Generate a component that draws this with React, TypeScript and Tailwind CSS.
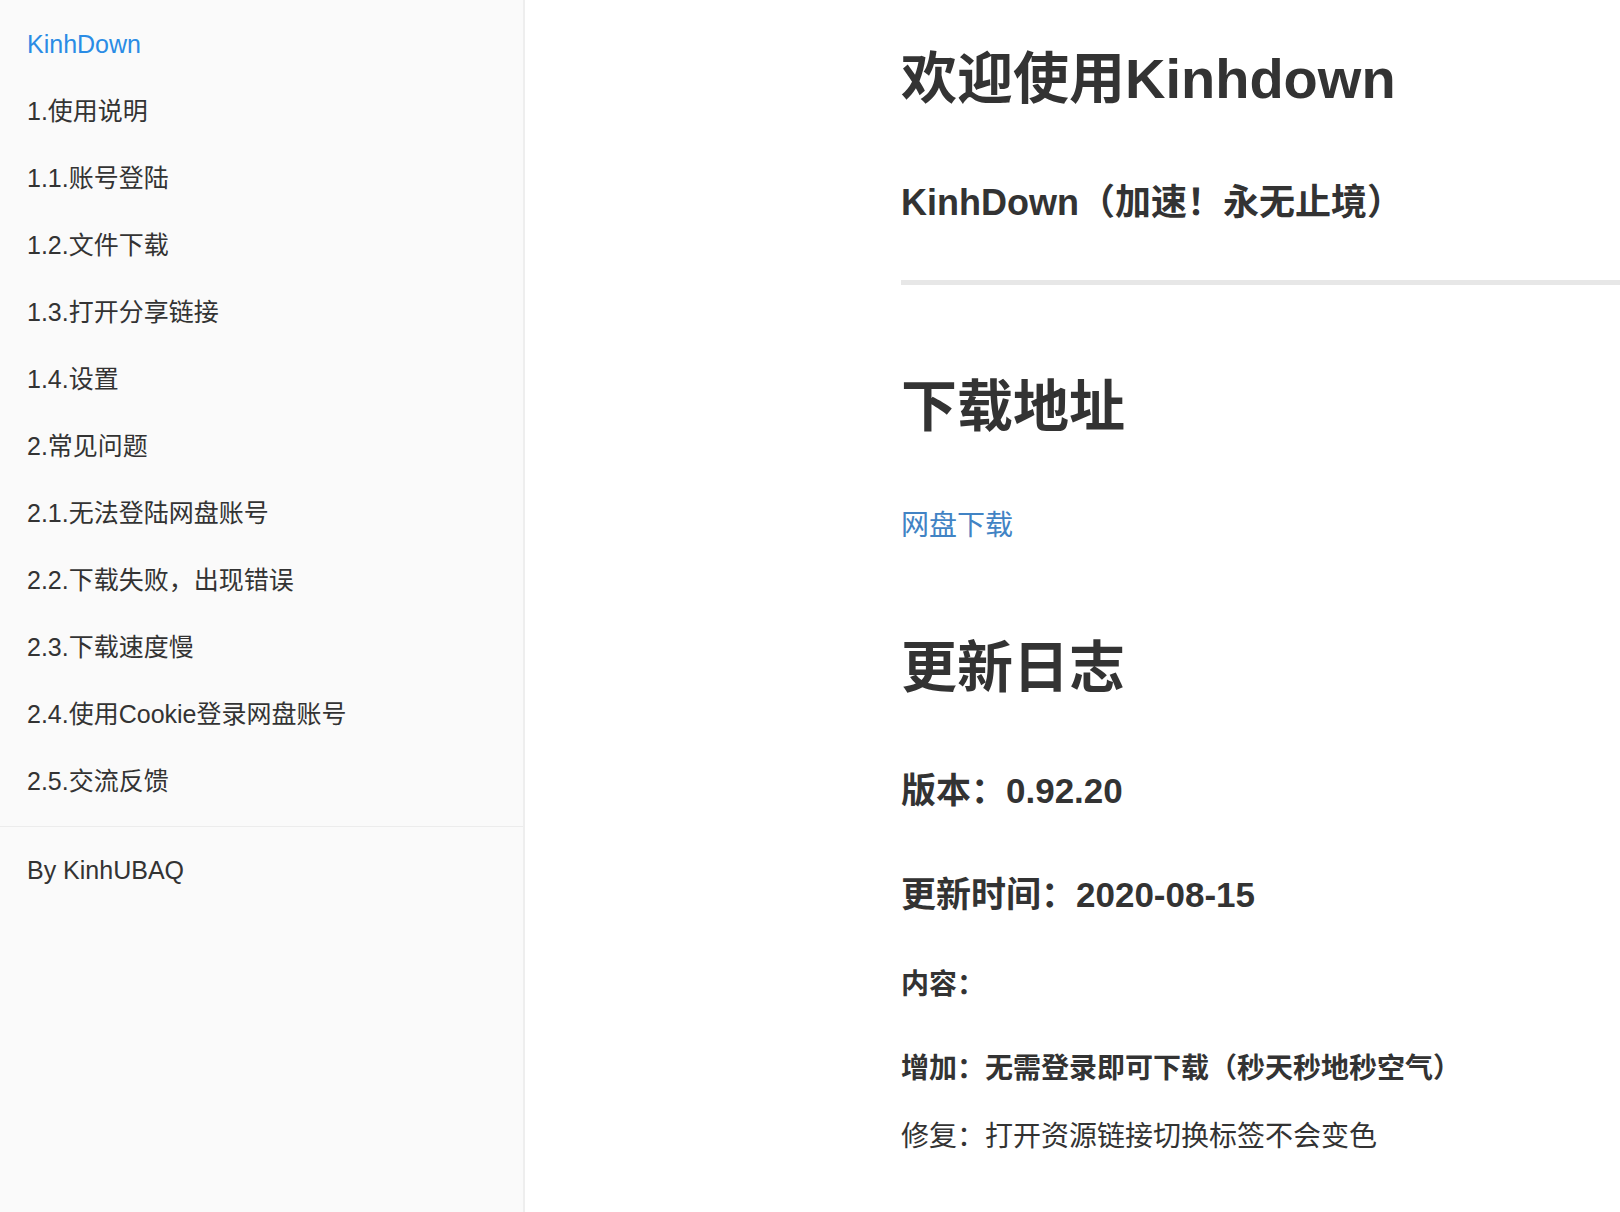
import React from 'react';

const navItems = [
  '1.使用说明',
  '1.1.账号登陆',
  '1.2.文件下载',
  '1.3.打开分享链接',
  '1.4.设置',
  '2.常见问题',
  '2.1.无法登陆网盘账号',
  '2.2.下载失败，出现错误',
  '2.3.下载速度慢',
  '2.4.使用Cookie登录网盘账号',
  '2.5.交流反馈',
];

export default function App() {
  return (
    <div className="flex min-h-screen h-[1212px] bg-white text-[#333] font-['Liberation_Sans','Noto_Sans_CJK_SC',sans-serif] overflow-hidden">
      {/* Sidebar */}
      <aside className="w-[525px] shrink-0 bg-[#fafafa] border-r-2 border-[#eeeeee] flex flex-col">
        <nav className="pt-[11px] mb-[11px]">
          <div className="h-[67px] flex items-center pl-[27px] text-[25px] text-[#2a8ce5]">KinhDown</div>
          {navItems.map((item) => (
            <div key={item} className="h-[67px] flex items-center pl-[27px] text-[25px] text-[#333]">
              {item}
            </div>
          ))}
        </nav>
        <div className="border-t border-[#ececec] h-[88px] flex items-center pl-[27px] text-[25px] text-[#333]">
          By KinhUBAQ
        </div>
      </aside>

      {/* Content */}
      <main className="flex-1 pl-[376px] pt-[47px]">
        <h1 className="text-[56px] leading-[64px] font-bold">欢迎使用Kinhdown</h1>
        <h2 className="mt-[70px] text-[36px] leading-[44px] font-bold">KinhDown（加速！永无止境）</h2>
        <div className="mt-[55px] h-[5px] bg-[#e7e7e7]" />
        <h1 className="mt-[90px] text-[56px] leading-[64px] font-bold">下载地址</h1>
        <a href="#" className="block mt-[69px] text-[28px] leading-[36px] text-[#4183c4]">网盘下载</a>
        <h1 className="mt-[92px] text-[56px] leading-[64px] font-bold">更新日志</h1>
        <h3 className="mt-[69px] text-[35px] leading-[44px] font-bold">版本：0.92.20</h3>
        <h3 className="mt-[60px] text-[35px] leading-[44px] font-bold">更新时间：2020-08-15</h3>
        <p className="mt-[50px] text-[28px] leading-[36px] font-bold">内容：</p>
        <p className="mt-[48px] text-[28px] leading-[36px] font-bold">增加：无需登录即可下载（秒天秒地秒空气）</p>
        <p className="mt-[32px] text-[28px] leading-[36px]">修复：打开资源链接切换标签不会变色</p>
      </main>
    </div>
  );
}
